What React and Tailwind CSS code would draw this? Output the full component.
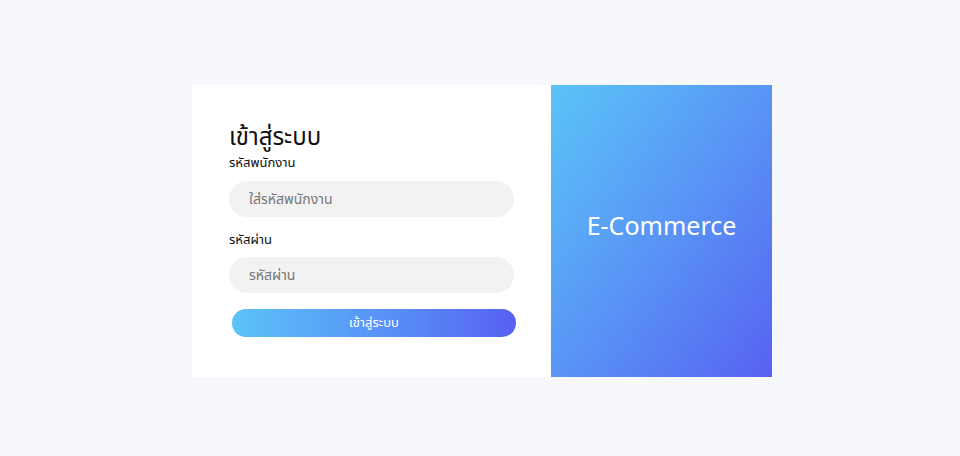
import React from "react";

const font = { fontFamily: '"Noto Sans", "Noto Sans Thai", "Open Sans", sans-serif' };

export default function App() {
  return (
    <div
      className="w-full h-[456px] bg-[#f7f8fc] flex items-center justify-center pl-[4px] pt-[5px]"
      style={font}
    >
      <div className="flex w-[580px] h-[292px] bg-white">
        {/* Left - Form */}
        <div className="w-[359px] pl-[37px] pr-[35px] pt-[35px]">
          <h1 className="text-[24px] leading-[32px] text-[#111] mb-[1px]">เข้าสู่ระบบ</h1>
          <label className="block text-[13px] leading-[18px] text-[#111] mb-[10px]">
            รหัสพนักงาน
          </label>
          <input
            type="text"
            placeholder="ใส่รหัสพนักงาน"
            className="w-[285px] h-[36px] rounded-full bg-[#f2f2f2] px-[20px] text-[14px] text-[#333] placeholder-[#777] outline-none"
          />
          <label className="block text-[13px] leading-[18px] text-[#111] mt-[13px] mb-[9px]">
            รหัสผ่าน
          </label>
          <input
            type="password"
            placeholder="รหัสผ่าน"
            className="w-[285px] h-[36px] rounded-full bg-[#f2f2f2] px-[20px] text-[14px] text-[#333] placeholder-[#777] outline-none"
          />
          <button className="mt-[16px] ml-[3px] w-[284px] h-[28px] rounded-full bg-gradient-to-r from-[#5bc3f8] to-[#5760f2] text-white text-[13px]">
            เข้าสู่ระบบ
          </button>
        </div>

        {/* Right - Brand */}
        <div className="flex-1 bg-gradient-to-br from-[#5bc4f7] to-[#5761f1] flex items-center justify-center">
          <span className="text-white text-[25px] pb-[10px]">E-Commerce</span>
        </div>
      </div>
    </div>
  );
}
